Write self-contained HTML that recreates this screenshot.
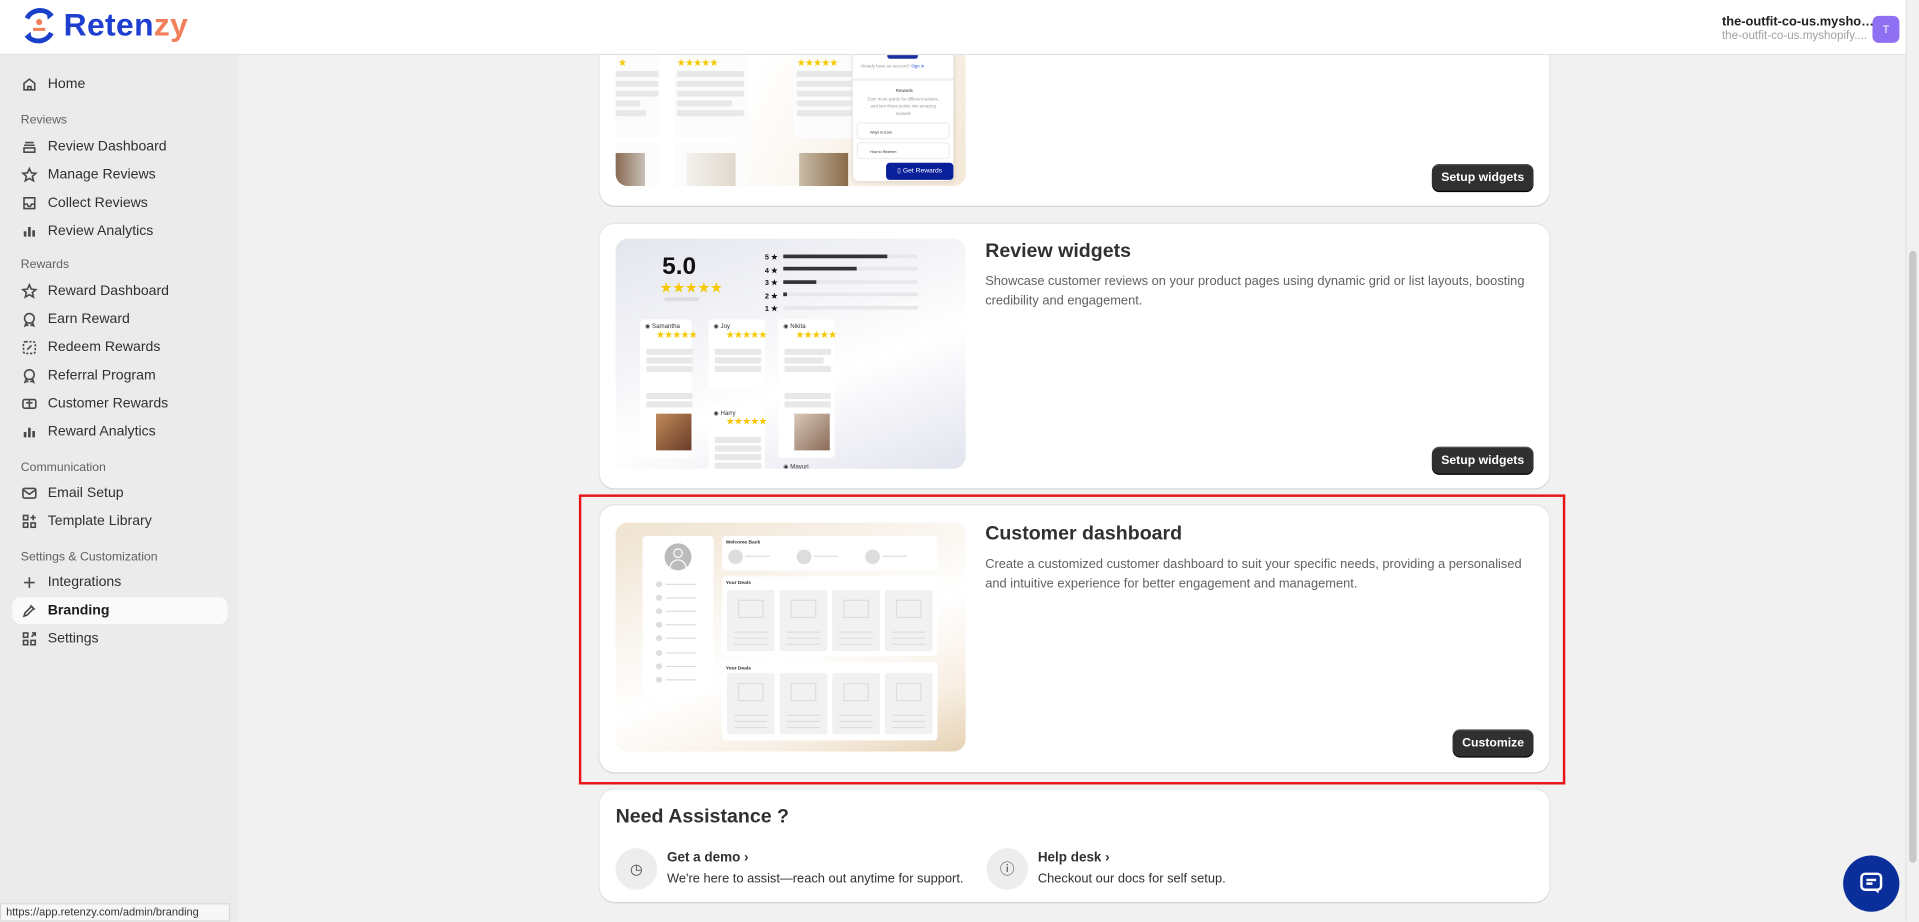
<!DOCTYPE html>
<html><head><meta charset="utf-8"><style>
*{box-sizing:border-box;margin:0;padding:0}
html,body{width:1919px;height:922px;overflow:hidden;background:#f1f1f1;font-family:"Liberation Sans",sans-serif;color:#303030}
#r{position:absolute;left:0;top:0;width:1568px;height:753px;transform:scale(1.22385);transform-origin:0 0;background:#f1f1f1;overflow:hidden}
.a{position:absolute}
.hdr{left:0;top:0;width:1557px;height:45px;background:#fff;border-bottom:1px solid #e3e3e3;z-index:5}
.side{left:0;top:45px;width:195px;height:708px;background:#ebebeb}
.it{position:absolute;left:17px;font-size:11.5px;color:#303030;display:flex;align-items:center;height:20px}
.it svg{width:14px;height:14px;margin-right:8px;stroke:#4a4a4a;fill:none;stroke-width:1.5}
.sec{position:absolute;left:17px;font-size:10px;color:#616161}
.card{position:absolute;left:490px;width:776px;background:#fff;border-radius:12px;box-shadow:0 1px 0 #d4d4d4,0 0 0 1px #e6e6e6}
.ttl{position:absolute;left:315px;font-size:16px;font-weight:bold;color:#303030}
.desc{position:absolute;left:315px;width:450px;font-size:10.5px;line-height:16px;color:#616161}
.btn{position:absolute;background:#303030;color:#fff;font-size:10px;font-weight:bold;border-radius:6px;height:22px;display:flex;align-items:center;justify-content:center;box-shadow:0 1px 0 #000,inset 0 1px 0 #555}
.img{position:absolute;left:13px;width:286px;border-radius:10px;overflow:hidden}
.bar{position:absolute;background:#e6e8ea;height:5px;border-radius:1px}
.rc{position:absolute;background:#fff;border-radius:3px}
.st{position:absolute;color:#f5c800;font-size:8px;letter-spacing:-0.5px}
.nm{position:absolute;font-size:5px;color:#333}
.ph{position:absolute;background:#f1f1f1;width:39px;height:50px;border-radius:2px}
.ph i{position:absolute;left:9px;top:8px;width:21px;height:15px;border:1px solid #ddd}
.ph b{position:absolute;left:6px;height:1px;width:27px;background:#ddd}
.dt{position:absolute;left:33px;width:5px;height:5px;border-radius:50%;background:#ddd}
.dl{position:absolute;left:41px;width:25px;height:1px;background:#ddd}
</style></head><body><div id="r">

<div class="a hdr">
 <svg class="a" style="left:16px;top:5px" width="32" height="32" viewBox="0 0 32 32"><path d="M6 10 A12 12 0 0 1 26 8" stroke="#1a3fc9" stroke-width="4" fill="none"/><path d="M26 22 A12 12 0 0 1 6 24" stroke="#1a3fc9" stroke-width="4" fill="none"/><path d="M22 4 l6 3 -5 4z M10 28 l-6 -3 5 -4z" fill="#1a3fc9"/><circle cx="16" cy="13" r="2.5" fill="#f07f5a"/><path d="M11 19 h10" stroke="#f07f5a" stroke-width="2.5"/></svg>
 <div class="a" style="left:52px;top:5px;font-size:26px;font-weight:bold;color:#1f3fd0;letter-spacing:0.3px">Reten<span style="color:#f07f5a">zy</span></div>
 <div class="a" style="left:1407px;top:12px;font-size:10.5px;font-weight:bold;color:#202020">the-outfit-co-us.mysho…</div>
 <div class="a" style="left:1407px;top:24px;font-size:9.5px;color:#a0a0a0">the-outfit-co-us.myshopify....</div>
 <div class="a" style="left:1530px;top:13px;width:22px;height:22px;border-radius:5px;background:#8f6ff2;color:#fff;font-size:9px;text-align:center;line-height:22px">T</div>
</div>
<div class="a" style="left:1557px;top:0;width:11px;height:753px;background:#f1f1f1;border-left:1px solid #e4e4e4"></div>
<div class="a" style="left:1560px;top:205px;width:6px;height:500px;background:#c8c8c8;border-radius:3px"></div>

<div class="a side">
 <div class="it" style="top:14px"><svg viewBox="0 0 16 16"><path d="M3 7 L8 3 L13 7 V13 H3Z M6.5 13 V10 h3 v3"/></svg>Home</div>
 <div class="sec" style="top:48px">Reviews</div>
 <div class="it" style="top:65px"><svg viewBox="0 0 16 16"><path d="M4 4h8 M3 6.5h10 M3 9h10v4H3z"/></svg>Review Dashboard</div>
 <div class="it" style="top:88px"><svg viewBox="0 0 16 16"><path d="M8 2l1.8 4 4.2.4-3.2 2.8 1 4.2L8 11.2 4.2 13.4l1-4.2L2 6.4 6.2 6z"/></svg>Manage Reviews</div>
 <div class="it" style="top:111px"><svg viewBox="0 0 16 16"><path d="M3 3h10v10H3z M3 9h3l1 2h2l1-2h3"/></svg>Collect Reviews</div>
 <div class="it" style="top:134px"><svg viewBox="0 0 16 16" style="stroke-width:2.5"><path d="M4 13V8 M8 13V4 M12 13V7"/></svg>Review Analytics</div>
 <div class="sec" style="top:166px">Rewards</div>
 <div class="it" style="top:183px"><svg viewBox="0 0 16 16"><path d="M8 2l1.8 4 4.2.4-3.2 2.8 1 4.2L8 11.2 4.2 13.4l1-4.2L2 6.4 6.2 6z"/></svg>Reward Dashboard</div>
 <div class="it" style="top:206px"><svg viewBox="0 0 16 16"><circle cx="8" cy="7" r="4.5"/><path d="M5 11l-1 3 2-1 1 1 M11 11l1 3-2-1-1 1"/></svg>Earn Reward</div>
 <div class="it" style="top:229px"><svg viewBox="0 0 16 16" style="stroke-dasharray:2 1.5"><rect x="2.5" y="2.5" width="11" height="11" rx="2"/><path d="M6 10l4-4" style="stroke-dasharray:none"/></svg>Redeem Rewards</div>
 <div class="it" style="top:252px"><svg viewBox="0 0 16 16"><circle cx="8" cy="7" r="4.5"/><path d="M5 11l-1 3 2-1 1 1 M11 11l1 3-2-1-1 1"/></svg>Referral Program</div>
 <div class="it" style="top:275px"><svg viewBox="0 0 16 16"><rect x="2" y="4" width="12" height="8" rx="1.5"/><path d="M8 4v8 M5 7h6"/></svg>Customer Rewards</div>
 <div class="it" style="top:298px"><svg viewBox="0 0 16 16" style="stroke-width:2.5"><path d="M4 13V8 M8 13V4 M12 13V7"/></svg>Reward Analytics</div>
 <div class="sec" style="top:332px">Communication</div>
 <div class="it" style="top:348px"><svg viewBox="0 0 16 16"><rect x="2" y="3.5" width="12" height="9" rx="1.5"/><path d="M2.5 5l5.5 4 5.5-4"/></svg>Email Setup</div>
 <div class="it" style="top:371px"><svg viewBox="0 0 16 16"><rect x="2.5" y="2.5" width="4" height="4"/><rect x="2.5" y="9.5" width="4" height="4"/><rect x="9.5" y="9.5" width="4" height="4"/><path d="M11.5 2v5 M9 4.5h5"/></svg>Template Library</div>
 <div class="sec" style="top:405px">Settings &amp; Customization</div>
 <div class="it" style="top:421px"><svg viewBox="0 0 16 16"><path d="M8 3v10 M3 8h10"/></svg>Integrations</div>
 <div class="a" style="left:10px;top:443px;width:176px;height:22px;background:#fafafa;border-radius:7px"></div>
 <div class="it" style="top:444px;font-weight:bold;color:#1a1a1a"><svg viewBox="0 0 16 16"><path d="M3 13l3-1 6-6-2-2-6 6z M9 3l4 4"/></svg>Branding</div>
 <div class="it" style="top:467px"><svg viewBox="0 0 16 16"><rect x="2.5" y="2.5" width="4" height="4"/><rect x="2.5" y="9.5" width="4" height="4"/><rect x="9.5" y="9.5" width="4" height="4"/><path d="M10 6l3.5-3.5 M10.5 2.5h3v3"/></svg>Settings</div>
</div>

<!-- card 1 -->
<div class="card" style="top:-40px;height:208px">
 <div class="img" style="top:40px;height:152px;background:linear-gradient(120deg,#fff 40%,#f3e7d6);border-radius:0 0 10px 10px">
  <div class="rc" style="left:0;top:40px;width:36px;height:73px;background:#fcfcfc"></div>
  <div class="rc" style="left:48px;top:40px;width:60px;height:73px;background:#fcfcfc"></div>
  <div class="rc" style="left:146px;top:40px;width:50px;height:73px;background:#fcfcfc"></div>
  <div class="st" style="left:2px;top:47px">★</div>
  <div class="bar" style="left:0;top:58px;width:35px"></div><div class="bar" style="left:0;top:66px;width:35px"></div><div class="bar" style="left:0;top:74px;width:35px"></div><div class="bar" style="left:0;top:82px;width:20px"></div><div class="bar" style="left:0;top:90px;width:25px"></div>
  <div class="st" style="left:50px;top:47px">★★★★★</div>
  <div class="bar" style="left:50px;top:58px;width:55px"></div><div class="bar" style="left:50px;top:66px;width:55px"></div><div class="bar" style="left:50px;top:74px;width:55px"></div><div class="bar" style="left:50px;top:82px;width:45px"></div><div class="bar" style="left:50px;top:90px;width:55px"></div>
  <div class="st" style="left:148px;top:47px">★★★★★</div>
  <div class="bar" style="left:148px;top:58px;width:45px"></div><div class="bar" style="left:148px;top:66px;width:45px"></div><div class="bar" style="left:148px;top:74px;width:45px"></div><div class="bar" style="left:148px;top:82px;width:45px"></div><div class="bar" style="left:148px;top:90px;width:45px"></div>
  <div class="rc" style="left:0;top:117px;width:36px;height:40px;background:#fcfcfc"></div>
  <div class="rc" style="left:48px;top:117px;width:60px;height:40px;background:#fcfcfc"></div>
  <div class="a" style="left:0;top:125px;width:24px;height:27px;background:linear-gradient(90deg,#8a6a50,#c8c0b8)"></div>
  <div class="a" style="left:58px;top:125px;width:40px;height:27px;background:linear-gradient(90deg,#f4f2ee,#e0d8cc)"></div>
  <div class="a" style="left:150px;top:125px;width:40px;height:27px;background:linear-gradient(90deg,#c9bca8,#8a6a48)"></div>
  <div class="a" style="left:194px;top:-10px;width:82px;height:158px;background:#fff;border-radius:5px;box-shadow:0 0 4px rgba(0,0,0,.15)"></div>
  <div class="a" style="left:222px;top:40px;width:25px;height:8px;background:#1a2fa0;border-radius:2px"></div>
  <div class="a" style="left:200px;top:52px;font-size:3.5px;color:#999">Already have an account? <span style="color:#2a56d8">Sign in</span></div>
  <div class="a" style="left:194px;top:64px;width:82px;height:2px;background:#eee"></div>
  <div class="a" style="left:229px;top:72px;font-size:3.5px;color:#333">Rewards</div>
  <div class="a" style="left:205px;top:78px;width:60px;font-size:3.5px;color:#999;text-align:center;line-height:6px">Earn more points for different actions, and turn those points into amazing rewards</div>
  <div class="a" style="left:197px;top:100px;width:76px;height:14px;border:1px solid #eee;border-radius:3px;font-size:3px;padding:5px 10px">Ways to Earn</div>
  <div class="a" style="left:197px;top:116px;width:76px;height:14px;border:1px solid #eee;border-radius:3px;font-size:3px;padding:5px 10px">How to Redeem</div>
  <div class="a" style="left:221px;top:133px;width:55px;height:14px;background:#0a1f9a;border-radius:3px;color:#fff;font-size:5.5px;line-height:14px;text-align:center">▯ Get Rewards</div>
 </div>
 <div class="btn" style="left:680px;top:174px;width:83px">Setup widgets</div>
</div>

<!-- card 2 -->
<div class="card" style="top:183px;height:216px">
 <div class="img" style="top:12px;height:188px;background:linear-gradient(160deg,#e4e6ee 0%,#f8f8fa 45%,#fff 60%,#e2e4ee 100%)">
  <div class="a" style="left:38px;top:12px;font-size:20px;font-weight:bold;color:#111">5.0</div>
  <div class="st" style="left:36px;top:33px;font-size:12px">★★★★★</div>
  <div class="a" style="left:40px;top:48px;width:28px;height:3px;background:#ddd"></div>
  <div class="a" style="left:122px;top:11px;font-size:6px;font-weight:bold;line-height:10.5px;color:#111">5 ★<br>4 ★<br>3 ★<br>2 ★<br>1 ★</div>
  <div class="bar" style="left:137px;top:13px;width:110px;height:3px"></div><div class="a" style="left:137px;top:13px;width:85px;height:3px;background:#333"></div>
  <div class="bar" style="left:137px;top:23px;width:110px;height:3px"></div><div class="a" style="left:137px;top:23px;width:60px;height:3px;background:#333"></div>
  <div class="bar" style="left:137px;top:34px;width:110px;height:3px"></div><div class="a" style="left:137px;top:34px;width:27px;height:3px;background:#333"></div>
  <div class="bar" style="left:137px;top:44px;width:110px;height:3px"></div><div class="a" style="left:137px;top:44px;width:3px;height:3px;background:#333"></div>
  <div class="bar" style="left:137px;top:55px;width:110px;height:3px"></div>
  <div class="rc" style="left:20px;top:66px;width:42px;height:113px"></div>
  <div class="rc" style="left:76px;top:66px;width:46px;height:56px"></div>
  <div class="rc" style="left:76px;top:136px;width:46px;height:60px"></div>
  <div class="rc" style="left:133px;top:66px;width:46px;height:113px"></div>
  <div class="rc" style="left:20px;top:190px;width:48px;height:10px"></div>
  <div class="nm" style="left:24px;top:69px">◉ Samantha</div><div class="st" style="left:33px;top:74px">★★★★★</div>
  <div class="nm" style="left:80px;top:69px">◉ Joy</div><div class="st" style="left:90px;top:74px">★★★★★</div>
  <div class="nm" style="left:137px;top:69px">◉ Nikita</div><div class="st" style="left:147px;top:74px">★★★★★</div>
  <div class="nm" style="left:80px;top:140px">◉ Harry</div><div class="st" style="left:90px;top:145px">★★★★★</div>
  <div class="nm" style="left:24px;top:191px">◉ Pooja</div>
  <div class="nm" style="left:137px;top:184px">◉ Mayuri</div><div class="st" style="left:147px;top:189px">★★★★★</div>
  <div class="bar" style="left:25px;top:90px;width:38px"></div><div class="bar" style="left:25px;top:97px;width:38px"></div><div class="bar" style="left:25px;top:104px;width:38px"></div>
  <div class="bar" style="left:25px;top:126px;width:38px"></div><div class="bar" style="left:25px;top:133px;width:38px"></div>
  <div class="bar" style="left:81px;top:90px;width:38px"></div><div class="bar" style="left:81px;top:97px;width:38px"></div><div class="bar" style="left:81px;top:104px;width:38px"></div>
  <div class="bar" style="left:138px;top:90px;width:38px"></div><div class="bar" style="left:138px;top:97px;width:32px"></div><div class="bar" style="left:138px;top:104px;width:38px"></div>
  <div class="bar" style="left:138px;top:126px;width:38px"></div><div class="bar" style="left:138px;top:133px;width:38px"></div>
  <div class="bar" style="left:81px;top:162px;width:38px"></div><div class="bar" style="left:81px;top:169px;width:38px"></div><div class="bar" style="left:81px;top:176px;width:38px"></div><div class="bar" style="left:81px;top:183px;width:38px"></div>
  <div class="a" style="left:33px;top:143px;width:29px;height:30px;background:linear-gradient(135deg,#c08a5a,#6a3c28)"></div>
  <div class="a" style="left:146px;top:143px;width:29px;height:30px;background:linear-gradient(135deg,#d8c8b8,#8a6a58)"></div>
 </div>
 <div class="ttl" style="top:14px">Review widgets</div>
 <div class="desc" style="top:39px">Showcase customer reviews on your product pages using dynamic grid or list layouts, boosting credibility and engagement.</div>
 <div class="btn" style="left:680px;top:182px;width:83px">Setup widgets</div>
</div>

<div class="a" style="left:473px;top:404px;width:806px;height:237px;border:2px solid #e8141a"></div>

<!-- card 3 -->
<div class="card" style="top:413px;height:218px">
 <div class="img" style="top:14px;height:187px;background:linear-gradient(160deg,#efe2cf 0%,#faf6f0 35%,#fff 55%,#f8efe4 80%,#e6d2b4 100%)">
  <div class="rc" style="left:22px;top:11px;width:58px;height:129px"></div>
  <div class="a" style="left:40px;top:17px;width:22px;height:22px;border-radius:50%;background:#bbb"></div>
  <div class="a" style="left:47px;top:21px;width:8px;height:8px;border-radius:50%;border:1.5px solid #fff"></div>
  <div class="a" style="left:44px;top:30px;width:14px;height:8px;border-radius:7px 7px 0 0;border:1.5px solid #fff;border-bottom:none"></div>
  <div class="dt" style="top:48px"></div><div class="dl" style="top:50px"></div>
  <div class="dt" style="top:59px"></div><div class="dl" style="top:61px"></div>
  <div class="dt" style="top:70px"></div><div class="dl" style="top:72px"></div>
  <div class="dt" style="top:81px"></div><div class="dl" style="top:83px"></div>
  <div class="dt" style="top:92px"></div><div class="dl" style="top:94px"></div>
  <div class="dt" style="top:104px"></div><div class="dl" style="top:106px"></div>
  <div class="dt" style="top:115px"></div><div class="dl" style="top:117px"></div>
  <div class="dt" style="top:126px"></div><div class="dl" style="top:128px"></div>
  <div class="rc" style="left:87px;top:11px;width:176px;height:28px"></div>
  <div class="a" style="left:90px;top:13px;font-size:4px;font-weight:bold">Welcome Back</div>
  <div class="a" style="left:92px;top:22px;width:12px;height:12px;border-radius:50%;background:#ddd"></div><div class="a" style="left:106px;top:27px;width:20px;height:1px;background:#ddd"></div>
  <div class="a" style="left:148px;top:22px;width:12px;height:12px;border-radius:50%;background:#ddd"></div><div class="a" style="left:162px;top:27px;width:20px;height:1px;background:#ddd"></div>
  <div class="a" style="left:204px;top:22px;width:12px;height:12px;border-radius:50%;background:#ddd"></div><div class="a" style="left:218px;top:27px;width:20px;height:1px;background:#ddd"></div>
  <div class="rc" style="left:87px;top:44px;width:176px;height:65px"></div>
  <div class="a" style="left:90px;top:46px;font-size:4px;font-weight:bold">Your Deals</div>
  <div class="rc" style="left:87px;top:114px;width:176px;height:64px"></div>
  <div class="a" style="left:90px;top:116px;font-size:4px;font-weight:bold">Your Deals</div>
  <div class="ph" style="left:91px;top:55px"><i></i><b style="top:34px"></b><b style="top:39px"></b><b style="top:44px"></b></div>
  <div class="ph" style="left:134px;top:55px"><i></i><b style="top:34px"></b><b style="top:39px"></b><b style="top:44px"></b></div>
  <div class="ph" style="left:177px;top:55px"><i></i><b style="top:34px"></b><b style="top:39px"></b><b style="top:44px"></b></div>
  <div class="ph" style="left:220px;top:55px"><i></i><b style="top:34px"></b><b style="top:39px"></b><b style="top:44px"></b></div>
  <div class="ph" style="left:91px;top:123px"><i></i><b style="top:34px"></b><b style="top:39px"></b><b style="top:44px"></b></div>
  <div class="ph" style="left:134px;top:123px"><i></i><b style="top:34px"></b><b style="top:39px"></b><b style="top:44px"></b></div>
  <div class="ph" style="left:177px;top:123px"><i></i><b style="top:34px"></b><b style="top:39px"></b><b style="top:44px"></b></div>
  <div class="ph" style="left:220px;top:123px"><i></i><b style="top:34px"></b><b style="top:39px"></b><b style="top:44px"></b></div>
 </div>
 <div class="ttl" style="top:15px">Customer dashboard</div>
 <div class="desc" style="top:40px">Create a customized customer dashboard to suit your specific needs, providing a personalised and intuitive experience for better engagement and management.</div>
 <div class="btn" style="left:697px;top:183px;width:66px">Customize</div>
</div>

<!-- assist -->
<div class="card" style="top:645px;height:92px">
 <div class="a" style="left:13px;top:14px;font-size:16px;font-weight:bold">Need Assistance ?</div>
 <div class="a" style="left:13px;top:48px;width:34px;height:34px;border-radius:50%;background:#ededed;text-align:center;line-height:34px;font-size:12px;color:#444">◷</div>
 <div class="a" style="left:55px;top:50px;font-size:11px;font-weight:bold">Get a demo ›</div>
 <div class="a" style="left:55px;top:67px;font-size:10.5px;color:#303030">We're here to assist—reach out anytime for support.</div>
 <div class="a" style="left:316px;top:48px;width:34px;height:34px;border-radius:50%;background:#ededed;text-align:center;line-height:34px;font-size:12px;color:#444">ⓘ</div>
 <div class="a" style="left:358px;top:50px;font-size:11px;font-weight:bold">Help desk ›</div>
 <div class="a" style="left:358px;top:67px;font-size:10.5px;color:#303030">Checkout our docs for self setup.</div>
</div>

<div class="a" style="left:1506px;top:699px;width:46px;height:46px;border-radius:50%;background:#0a2f9a"></div>
<svg class="a" style="left:1519px;top:712px" width="20" height="20" viewBox="0 0 20 20"><rect x="2" y="2" width="16" height="13" rx="3" fill="none" stroke="#fff" stroke-width="2"/><path d="M6 7h8 M6 10h5" stroke="#fff" stroke-width="2"/><path d="M12 15l4 3v-3" fill="#fff"/></svg>

<div class="a" style="left:0;top:738px;width:188px;height:15px;background:#f7f7f7;border:1px solid #d8d8d8;font-size:9px;color:#333;padding:1px 4px">https://app.retenzy.com/admin/branding</div>
</div></body></html>
